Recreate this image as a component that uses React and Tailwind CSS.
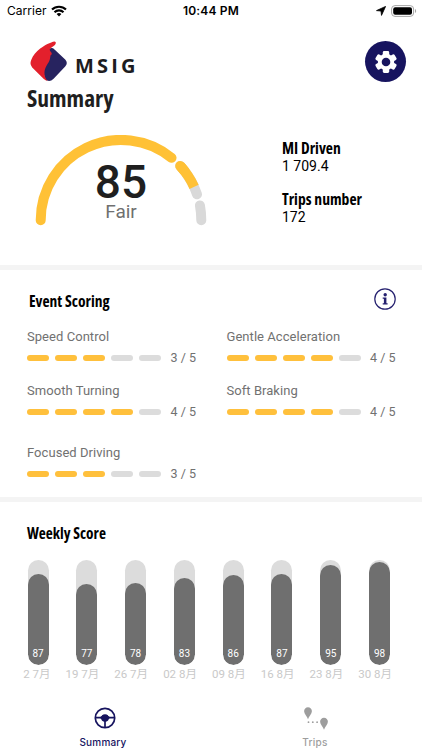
import React from 'react';

const events = [
  { name: 'Speed Control', score: 3 },
  { name: 'Gentle Acceleration', score: 4 },
  { name: 'Smooth Turning', score: 4 },
  { name: 'Soft Braking', score: 4 },
  { name: 'Focused Driving', score: 3 },
];

const weeks = [
  { label: '2 7月', score: 87 },
  { label: '19 7月', score: 77 },
  { label: '26 7月', score: 78 },
  { label: '02 8月', score: 83 },
  { label: '09 8月', score: 86 },
  { label: '16 8月', score: 87 },
  { label: '23 8月', score: 95 },
  { label: '30 8月', score: 98 },
];

const CONDENSED = "font-['Open_Sans',sans-serif] font-bold font-stretch-condensed whitespace-nowrap";

// Arc between two angles (degrees, counter-clockwise from the right side)
const arc = (from, to) => {
  const r = 80.3;
  const point = (deg) => {
    const a = (deg * Math.PI) / 180;
    return `${(86 + r * Math.cos(a)).toFixed(2)} ${(85.2 - r * Math.sin(a)).toFixed(2)}`;
  };
  return `M${point(from)} A${r} ${r} 0 0 1 ${point(to)}`;
};

const StatusBar = () => (
  <div className="h-[22px] grid grid-cols-3 items-center px-[7px] text-black font-['Inter',sans-serif] text-[12px]">
    <div className="flex items-center gap-[4px]">
      <span className="tracking-[0.05px]">Carrier</span>
      <svg width="16" height="12" viewBox="0 0 16 12" fill="none" stroke="#000" strokeWidth="2.1">
        <path d="M1 4.6a9.9 9.9 0 0 1 14 0" />
        <path d="M3.5 7.3a6.3 6.3 0 0 1 9 0" />
        <path d="M8 11.6 5.6 9.1a3.4 3.4 0 0 1 4.8 0z" fill="#000" stroke="none" />
      </svg>
    </div>
    <span className="text-center font-semibold tracking-[0.15px] whitespace-nowrap">10:44 PM</span>
    <div className="flex items-center justify-end gap-[5px] -mr-[2px]">
      <svg width="10" height="10" viewBox="0 0 10 10">
        <path d="M9.6.4 5.5 9.4 5 5 .5 4.6z" fill="#000" stroke="#000" strokeWidth=".8" strokeLinejoin="round" />
      </svg>
      <svg width="26" height="12" viewBox="0 0 26 12">
        <rect x=".6" y=".6" width="22" height="10.8" rx="3.4" fill="none" stroke="#a6a6a6" />
        <rect x="2.2" y="2.2" width="18.8" height="7.6" rx="2" fill="#000" />
        <path d="M24 4v4a2.3 2.3 0 0 0 0-4" fill="#a6a6a6" />
      </svg>
    </div>
  </div>
);

const Logo = () => (
  <div className="flex items-center h-[41px]">
    <svg width="38" height="41" viewBox="0 0 38 41">
      <path d="M19 8Q22 6 24.5 8.4L35.2 18.6Q38.4 22 35.2 25.4L23.6 37.8Q19.6 41.8 15.2 38.6L13 30 17 12Z" fill="#27235f" />
      <path d="M24.6 .4C26.4 .5 26 3 24.6 4.2C23 5.8 20.6 6.6 19.8 8.2C19.4 10.6 22.2 10.6 21.8 13.6C20.2 12.8 20.6 15.6 19.8 18.4C18.6 22.4 14.8 25.6 14.5 31C14.3 35 15.2 37.4 17.6 39.9Q15.6 39.6 13.8 37.9L2.2 26.4Q-.6 23.4 1.2 19C2.8 14.8 6.2 10.6 10.2 7.5C14.4 4.4 20.6 .9 24.6 .4Z" fill="#e3202c" />
    </svg>
    <span className="ml-[7px] mt-[8px] font-['Open_Sans',sans-serif] font-bold text-[20px] leading-none tracking-[3.2px] text-[#1d1d1f]">
      MSIG
    </span>
  </div>
);

const SettingsButton = () => (
  <button className="size-[41px] rounded-full bg-[#17145f] flex items-center justify-center">
    <svg width="24" height="24" viewBox="-12 -12 24 24" fill="#fff">
      <circle r="8.2" />
      {[0, 60, 120].map((angle) => (
        <rect key={angle} x="-3.2" y="-11" width="6.4" height="22" rx="1.4" transform={`rotate(${angle})`} />
      ))}
      <circle r="4.3" fill="#17145f" />
    </svg>
  </button>
);

const Gauge = () => (
  <div className="relative w-[172px] h-[92px]">
    <svg width="172" height="92" viewBox="0 0 172 92" fill="none" strokeWidth="10" strokeLinecap="round">
      <path d={arc(180, 51)} stroke="#ffc136" />
      <path d={arc(42.5, 18.8)} stroke="#d9d9d9" />
      <path d={arc(42.5, 38)} stroke="#ffc136" />
      <path d={arc(42.5, 24.5)} stroke="#ffc136" strokeLinecap="butt" />
      <path d={arc(10.6, 0)} stroke="#d9d9d9" />
    </svg>
    <div className="absolute inset-x-0 top-[20px] flex flex-col items-center font-['Roboto',sans-serif]">
      <span className="text-[46px] leading-[54px] font-medium text-[#1f1f1f]">85</span>
      <span className="-mt-[6px] text-[19px] leading-[18px] text-[#707070]">Fair</span>
    </div>
  </div>
);

const Stat = ({ label, value }) => (
  <div className="text-black">
    <p className={`${CONDENSED} text-[15.6px] leading-[18px]`}>{label}</p>
    <p className="mt-[1px] font-['Roboto',sans-serif] text-[14px] leading-[17px]">{value}</p>
  </div>
);

const EventScore = ({ name, score }) => (
  <div className="font-['Roboto',sans-serif] text-[#717171]">
    <p className="text-[13px] leading-[16px] tracking-[0.05px]">{name}</p>
    <div className="mt-[5px] flex items-center gap-[6px] h-4">
      {[1, 2, 3, 4, 5].map((n) => (
        <span key={n} className={`w-[22px] h-[6px] rounded-full ${n <= score ? 'bg-[#ffc03c]' : 'bg-[#dcdcdc]'}`} />
      ))}
      <span className="ml-[3.5px] text-[12.5px] leading-4">{score} / 5</span>
    </div>
  </div>
);

const WeekBar = ({ label, score }) => (
  <div className="w-[21px] flex flex-col items-center font-['Roboto',sans-serif]">
    <div className="w-full h-[105px] rounded-full bg-[#dcdcdc] flex items-end overflow-hidden">
      <div
        className="w-full rounded-full bg-[#6f6f6f] flex items-end justify-center pb-[5px]"
        style={{ height: `${score}%` }}
      >
        <span className="text-[10px] leading-[12px] text-white">{score}</span>
      </div>
    </div>
    <span className="mt-[1px] w-[40px] mr-[15px] text-right text-[11.5px] leading-4 text-[#c9c9c9] whitespace-nowrap font-['Roboto','Noto_Sans_CJK_JP',sans-serif]">
      {label}
    </span>
  </div>
);

const TabBar = () => (
  <nav className="h-[60px] grid grid-cols-2 pt-[17px] font-['Inter',sans-serif] text-[10px] font-medium">
    <div className="flex flex-col items-center text-[#17145f]">
      <svg className="mr-[1px]" width="22" height="22" viewBox="0 0 22 22" fill="none" stroke="currentColor" strokeWidth="1.7">
        <circle cx="11" cy="11" r="9.7" />
        <circle cx="11" cy="11" r="3.8" fill="currentColor" stroke="none" />
        <path d="M1.5 10.6h19M11 13v7.5" />
        <path d="M5.5 10.6 9 8.3v5zM16.5 10.6 13 8.3v5z" fill="currentColor" stroke="none" />
      </svg>
      <span className="mt-[7px] mr-[5px] leading-[12px] tracking-[0.2px]">Summary</span>
    </div>
    <div className="flex flex-col items-center text-[#9d9d9d]">
      <svg className="mr-[1px]" width="26" height="24" viewBox="0 0 26 24" fill="currentColor">
        <path d="M5 .3a3.9 3.9 0 0 1 3.9 4C8.9 7 5.7 9.5 5 12.3 4.3 9.5 1.1 7 1.1 4.3A3.9 3.9 0 0 1 5 .3z" />
        <path d="M21 10.8a3.9 3.9 0 0 1 3.9 4c0 2.7-3.2 5.2-3.9 8-.7-2.8-3.9-5.3-3.9-8a3.9 3.9 0 0 1 3.9-4z" />
        <circle cx="5.5" cy="15.2" r=".9" />
        <circle cx="9.8" cy="15.2" r=".9" />
        <circle cx="14.1" cy="15.2" r=".9" />
      </svg>
      <span className="mt-[5px] mr-[3px] leading-[12px] tracking-[0.3px]">Trips</span>
    </div>
  </nav>
);

const App = () => {
  return (
    <div className="w-[422px] h-[750px] bg-white overflow-hidden flex flex-col">
      <StatusBar />

      <section className="h-[243px] pt-[19px]">
        <div className="flex justify-between items-start pl-[30px] pr-[16px]">
          <Logo />
          <SettingsButton />
        </div>
        <h1 className={`${CONDENSED} ml-[27px] mt-[1px] text-[23.5px] leading-[30px] text-[#1f1f1f]`}>Summary</h1>
        <div className="flex pl-[35px] mt-[22px]">
          <Gauge />
          <div className="ml-[75px] mt-[4px] flex flex-col gap-[15px]">
            <Stat label="MI Driven" value="1 709.4" />
            <Stat label="Trips number" value="172" />
          </div>
        </div>
      </section>

      <div className="h-[5px] bg-[#f4f4f4]" />

      <section className="h-[227px] pt-[18px]">
        <div className="flex justify-between items-center pl-[29px] pr-[26px] h-[23px]">
          <h2 className={`${CONDENSED} text-[15.5px] leading-[20px] mt-[2px] text-black`}>Event Scoring</h2>
          <svg className="-mt-[1px]" width="22" height="22" viewBox="0 0 22 22">
            <circle cx="11" cy="11" r="10.2" fill="none" stroke="#25206f" strokeWidth="1.2" />
            <circle cx="11.2" cy="6.7" r="1.7" fill="#25206f" />
            <path d="M8.7 9.5h3.7v5.7h1.2v1.3H8.7v-1.3h1.2v-4.4H8.7z" fill="#25206f" />
          </svg>
        </div>
        <div className="grid grid-cols-[199.5px_1fr] grid-rows-[53.5px_62.5px_auto] pl-[27px] mt-[18px]">
          {events.map((event) => (
            <EventScore key={event.name} name={event.name} score={event.score} />
          ))}
        </div>
      </section>

      <div className="h-[5px] bg-[#f4f4f4]" />

      <section className="h-[188px] pt-[21px]">
        <h2 className={`${CONDENSED} ml-[27px] text-[15.3px] leading-[20px] text-black`}>Weekly Score</h2>
        <div className="flex gap-[27.8px] pl-[27.5px] mt-[17px]">
          {weeks.map((week) => (
            <WeekBar key={week.label} label={week.label} score={week.score} />
          ))}
        </div>
      </section>

      <TabBar />
    </div>
  );
};

export default App;
